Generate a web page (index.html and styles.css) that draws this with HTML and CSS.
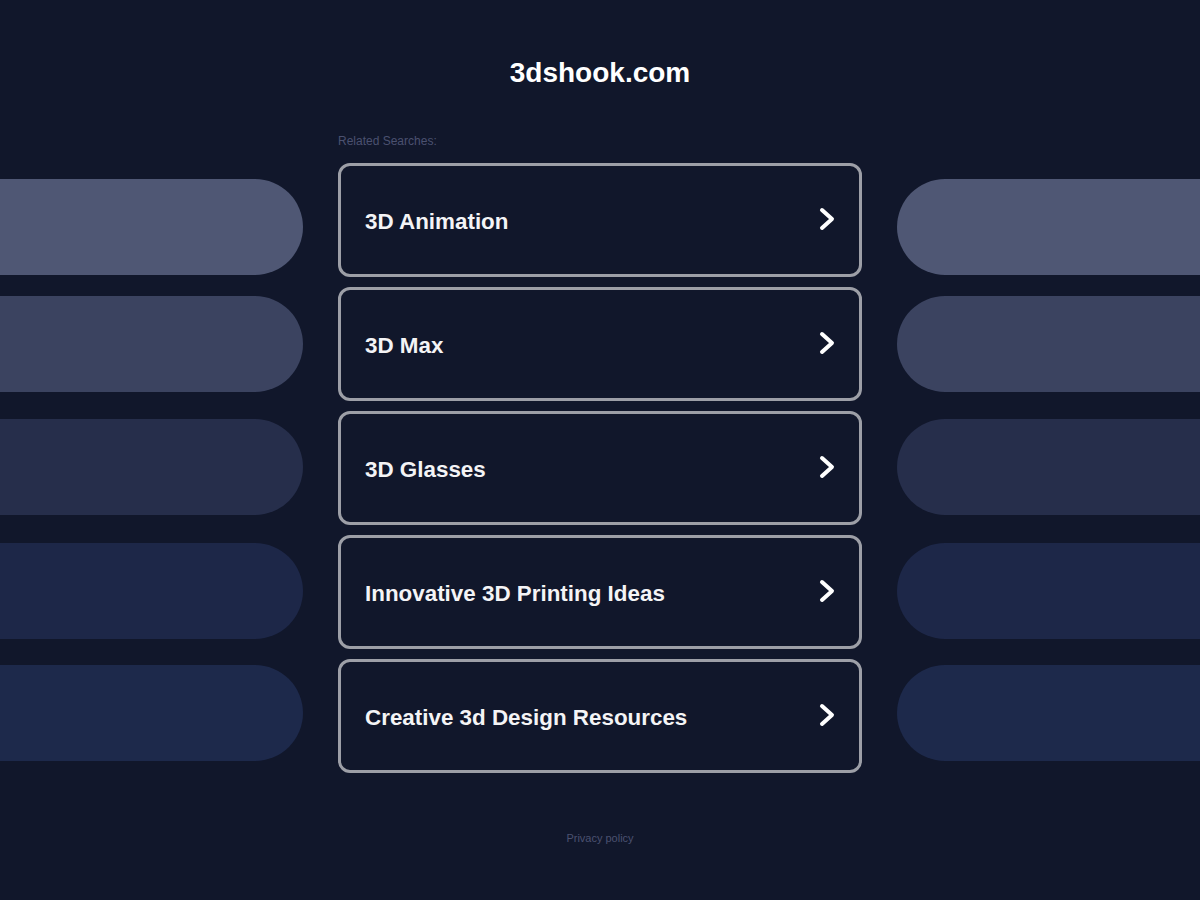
FILE: index.html
```html
<!DOCTYPE html>
<html lang="en">
<head>
<meta charset="utf-8">
<title>3dshook.com</title>
<link rel="stylesheet" href="styles.css">
</head>
<body>
<header class="header">
  <h1 class="title">3dshook.com</h1>
</header>
<main class="main">
  <div class="grid">
    <div></div>
    <div class="label">Related Searches:</div>
    <div></div>

    <div class="pill pill-left p1"></div>
    <a class="card" href="#"><span class="card-text">3D Animation</span><svg class="chev" viewBox="0 0 18 26" width="18" height="26"><polyline points="4,4 14,13 4,22"/></svg></a>
    <div class="pill pill-right p1"></div>

    <div class="pill pill-left p2"></div>
    <a class="card" href="#"><span class="card-text">3D Max</span><svg class="chev" viewBox="0 0 18 26" width="18" height="26"><polyline points="4,4 14,13 4,22"/></svg></a>
    <div class="pill pill-right p2"></div>

    <div class="pill pill-left p3"></div>
    <a class="card" href="#"><span class="card-text">3D Glasses</span><svg class="chev" viewBox="0 0 18 26" width="18" height="26"><polyline points="4,4 14,13 4,22"/></svg></a>
    <div class="pill pill-right p3"></div>

    <div class="pill pill-left p4"></div>
    <a class="card" href="#"><span class="card-text">Innovative 3D Printing Ideas</span><svg class="chev" viewBox="0 0 18 26" width="18" height="26"><polyline points="4,4 14,13 4,22"/></svg></a>
    <div class="pill pill-right p4"></div>

    <div class="pill pill-left p5"></div>
    <a class="card" href="#"><span class="card-text">Creative 3d Design Resources</span><svg class="chev" viewBox="0 0 18 26" width="18" height="26"><polyline points="4,4 14,13 4,22"/></svg></a>
    <div class="pill pill-right p5"></div>
  </div>
</main>
<footer class="footer">
  <a class="privacy" href="#">Privacy policy</a>
</footer>
</body>
</html>
```

FILE: styles.css
```css
html, body {
  margin: 0;
  padding: 0;
  background: #11172b;
  font-family: "Liberation Sans", Arial, sans-serif;
  color: #ffffff;
}

.header {
  padding-top: 56px;
  text-align: center;
}

.title {
  margin: 0;
  font-size: 28px;
  line-height: 34px;
  font-weight: bold;
  color: #ffffff;
}

.main {
  padding-top: 44px;
}

.grid {
  display: grid;
  grid-template-columns: 1fr 524px 1fr;
  column-gap: 35px;
  row-gap: 10px;
  align-items: center;
}

.label {
  font-size: 12px;
  line-height: 14px;
  color: #4b5170;
  margin-bottom: 5px;
}

.pill {
  height: 96px;
}

.pill-left {
  border-radius: 0 48px 48px 0;
}

.pill-right {
  border-radius: 48px 0 0 48px;
}

.p1 { background: #4f5774; transform: translateY(7px); }
.p2 { background: #3b4360; transform: translateY(0); }
.p3 { background: #262e4b; transform: translateY(-1px); }
.p4 { background: #1d2748; transform: translateY(-1px); }
.p5 { background: #1d294b; transform: translateY(-3px); }

.card {
  box-sizing: border-box;
  height: 114px;
  border: 3px solid #9d9fa7;
  border-radius: 12px;
  display: flex;
  align-items: center;
  justify-content: space-between;
  padding: 3px 23px 0 24px;
  text-decoration: none;
  background: #11172b;
}

.card-text {
  font-size: 22.4px;
  font-weight: bold;
  color: #f4f4f6;
}

.chev {
  display: block;
  margin-top: -5px;
  fill: none;
  stroke: #ffffff;
  stroke-width: 4;
  stroke-linecap: round;
  stroke-linejoin: round;
}

.footer {
  padding-top: 55px;
  text-align: center;
}

.privacy {
  font-size: 11px;
  line-height: 14px;
  color: #4b5170;
  text-decoration: none;
}
```
